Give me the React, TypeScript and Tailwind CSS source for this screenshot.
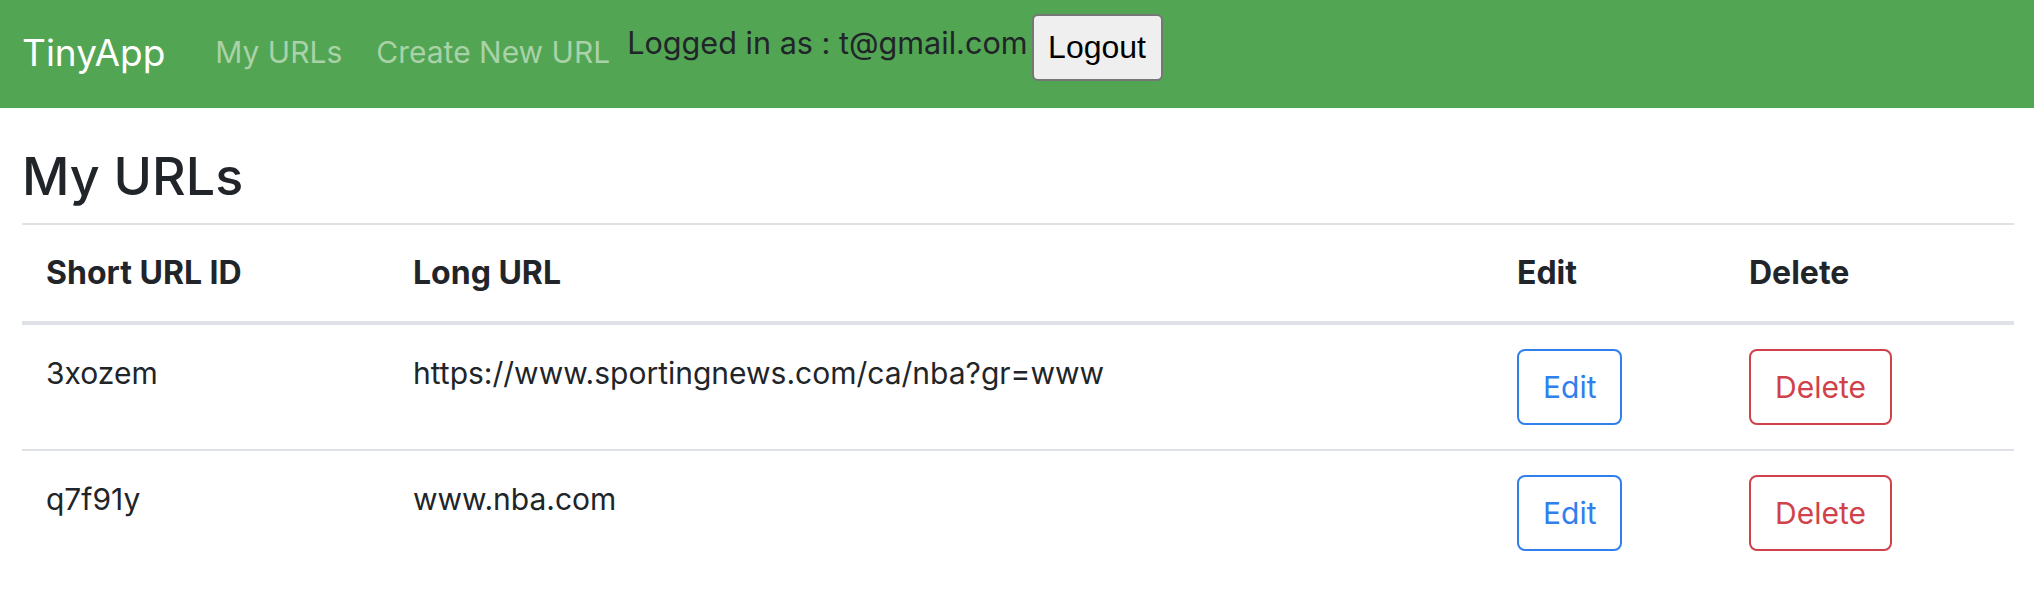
import React from "react";

const rows = [
  { id: "3xozem", url: "https://www.sportingnews.com/ca/nba?gr=www" },
  { id: "q7f91y", url: "www.nba.com" },
];

export default function App() {
  return (
    <div className="min-h-[612px] bg-white text-[#212529] font-['Inter',sans-serif]">
      <nav className="flex h-[108px] items-start bg-[#52a552] pl-[22px]">
        <a className="mt-[29px] text-[37px] leading-[48px] text-white">TinyApp</a>
        <a className="ml-[50px] mt-[32px] text-[30px] leading-[40px] text-[#a9d2a9]">My URLs</a>
        <a className="ml-[34px] mt-[32px] text-[30px] leading-[40px] text-[#a9d2a9]">Create New URL</a>
        <span className="ml-[17px] mt-[23px] text-[30.6px] leading-[40px] text-[#212529]">
          Logged in as : t@gmail.com
        </span>
        <button className="ml-[4px] mt-[14px] h-[67px] w-[131px] rounded-[6px] border-2 border-[#767676] bg-[#efefef] font-['Liberation_Sans',sans-serif] text-[32px] leading-[37px] text-black">
          Logout
        </button>
      </nav>
      <main className="pl-[22px] pr-[20px]">
        <h1 className="mt-[39px] mb-[17px] text-[52px] font-medium leading-[59px]">My URLs</h1>
        <table className="w-[1992px] table-fixed border-separate border-spacing-0 text-left text-[30px] leading-[48px]">
          <thead>
            <tr>
              <th className="w-[367px] border-t-2 border-b-4 border-[#dee2e6] p-[24px] align-top text-[32px] font-bold">Short URL ID</th>
              <th className="w-[1104px] border-t-2 border-b-4 border-[#dee2e6] p-[24px] align-top text-[32px] font-bold">Long URL</th>
              <th className="w-[232px] border-t-2 border-b-4 border-[#dee2e6] p-[24px] align-top text-[32px] font-bold">Edit</th>
              <th className="w-[289px] border-t-2 border-b-4 border-[#dee2e6] p-[24px] align-top text-[32px] font-bold">Delete</th>
            </tr>
          </thead>
          <tbody>
            {rows.map((r, i) => (
              <tr key={r.id}>
                <td className={`p-[24px] align-top ${i === 0 ? "border-b-2 border-[#dee2e6]" : ""}`}>{r.id}</td>
                <td className={`p-[24px] align-top ${i === 0 ? "border-b-2 border-[#dee2e6]" : ""}`}>{r.url}</td>
                <td className={`p-[24px] align-top ${i === 0 ? "border-b-2 border-[#dee2e6]" : ""}`}>
                  <button className="block rounded-[8px] border-2 border-[#2f80ed] px-[24px] py-[12px] text-[30px] leading-[48px] text-[#2f80ed]">
                    Edit
                  </button>
                </td>
                <td className={`p-[24px] align-top ${i === 0 ? "border-b-2 border-[#dee2e6]" : ""}`}>
                  <button className="block rounded-[8px] border-2 border-[#d0414a] px-[24px] py-[12px] text-[30px] leading-[48px] text-[#d0414a]">
                    Delete
                  </button>
                </td>
              </tr>
            ))}
          </tbody>
        </table>
      </main>
    </div>
  );
}
